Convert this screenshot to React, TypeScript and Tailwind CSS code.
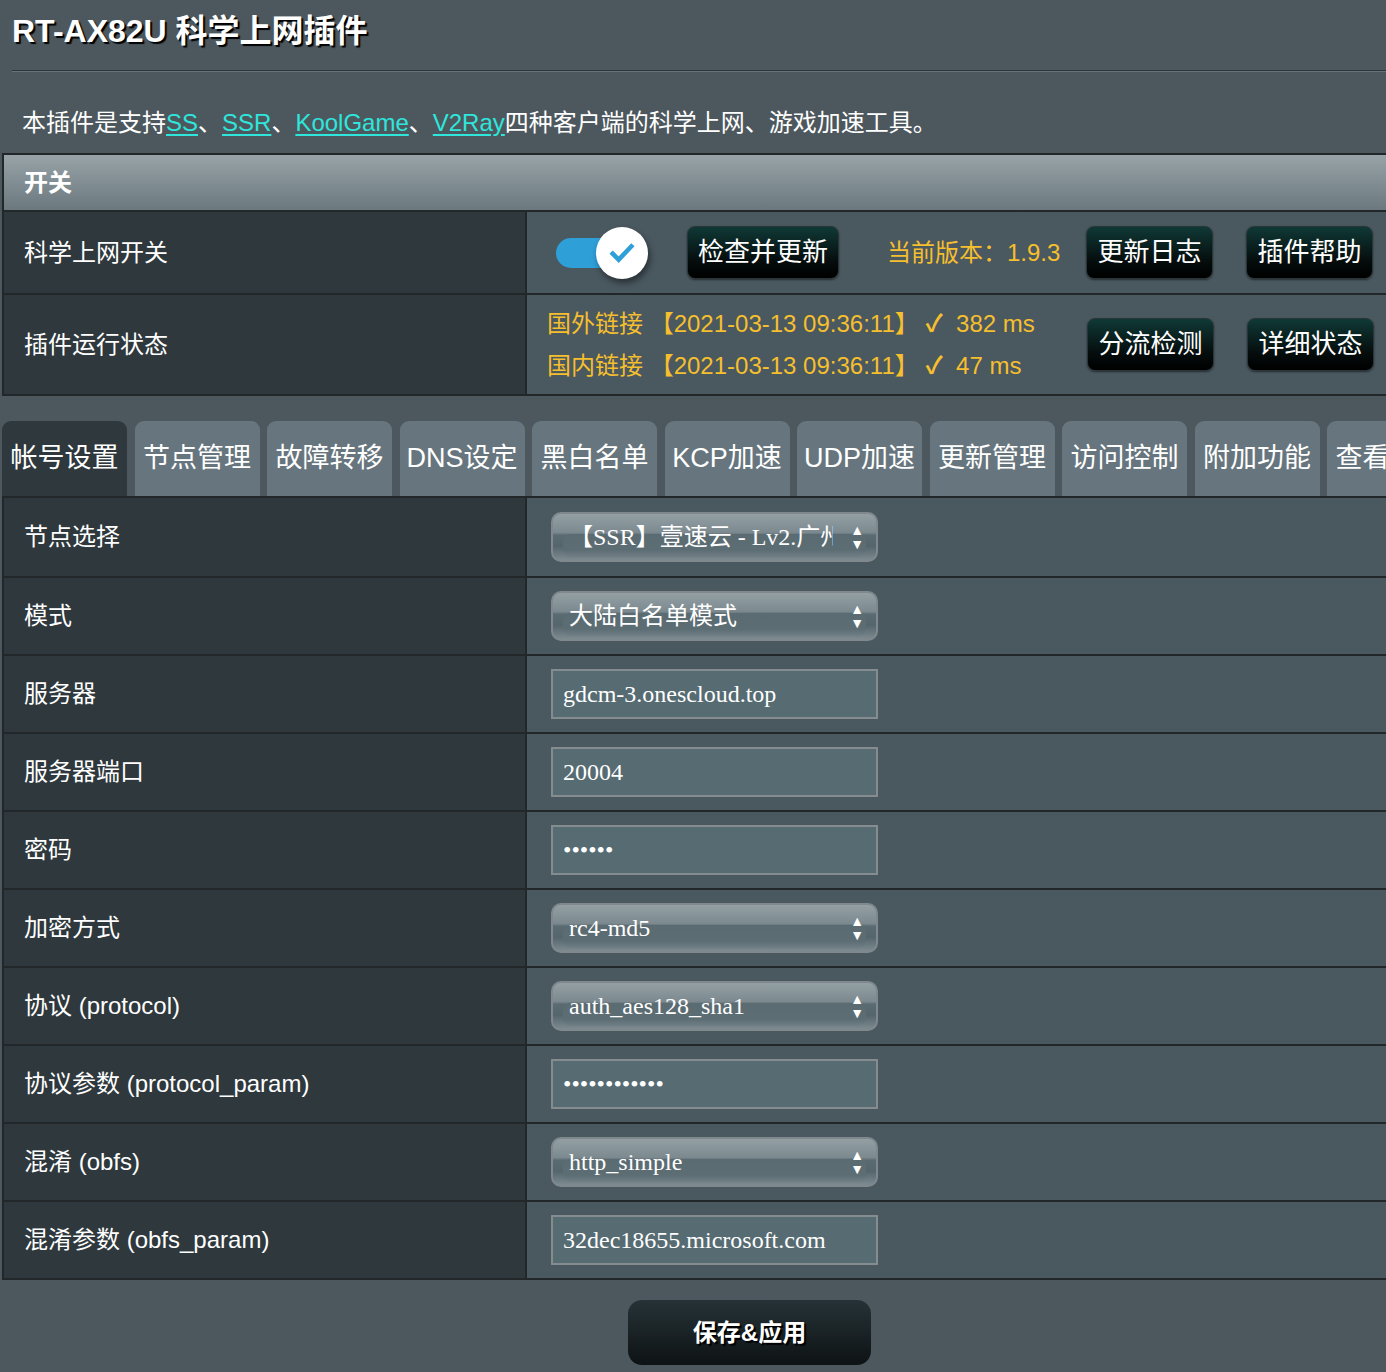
import { Fragment } from 'react';

const sans = 'font-["Liberation_Sans","Noto_Sans_CJK_SC",sans-serif]';
const serif = 'font-["Liberation_Serif","Noto_Sans_CJK_SC",serif]';

const tabs = ['帐号设置', '节点管理', '故障转移', 'DNS设定', '黑白名单', 'KCP加速', 'UDP加速', '更新管理', '访问控制', '附加功能', '查看日志'];

type Field = { label: string; kind: 'select' | 'input'; value: string };

const fields: Field[] = [
  { label: '节点选择', kind: 'select', value: '【SSR】壹速云 - Lv2.广州' },
  { label: '模式', kind: 'select', value: '大陆白名单模式' },
  { label: '服务器', kind: 'input', value: 'gdcm-3.onescloud.top' },
  { label: '服务器端口', kind: 'input', value: '20004' },
  { label: '密码', kind: 'input', value: '••••••' },
  { label: '加密方式', kind: 'select', value: 'rc4-md5' },
  { label: '协议 (protocol)', kind: 'select', value: 'auth_aes128_sha1' },
  { label: '协议参数 (protocol_param)', kind: 'input', value: '••••••••••••' },
  { label: '混淆 (obfs)', kind: 'select', value: 'http_simple' },
  { label: '混淆参数 (obfs_param)', kind: 'input', value: '32dec18655.microsoft.com' },
];

const DarkButton = ({ children }: { children: string }) => (
  <button className="flex h-[53px] w-full shrink-0 items-center justify-center whitespace-nowrap rounded-[8px] border border-[#2a3537] bg-[linear-gradient(to_bottom,#0f3936,#050b0b_70%,#000)] text-[26px] text-white shadow-[0_1px_2px_rgba(0,0,0,0.5)]">
    {children}
  </button>
);

const Select = ({ value }: { value: string }) => (
  <div className="relative flex h-[50px] w-[327px] items-center overflow-hidden rounded-[10px] border-2 border-[#7f898d] bg-[linear-gradient(to_bottom,#939fa3_0%,#7c8a90_40%,#5b6b72_46%,#55656c_70%,#7d8b90_100%)]">
    <div className="absolute inset-x-[10px] bottom-[3px] top-[20px] rounded-[8px] bg-[linear-gradient(to_bottom,#5b6b72,#5d6d74_70%,#6f7f85)]" />
    <span className={`relative w-[280px] overflow-hidden whitespace-nowrap pl-[16px] text-[24px] text-white ${serif}`}>{value}</span>
    <span className="absolute right-[12px] top-1/2 flex -translate-y-1/2 flex-col items-center text-[14px] leading-[14px] text-white">
      <span>▲</span>
      <span>▼</span>
    </span>
  </div>
);

const Input = ({ value }: { value: string }) => (
  <div className="flex h-[50px] w-[327px] items-center border-2 border-[#858c8f] bg-[#566b72] pl-[10px]">
    <span className={`whitespace-nowrap text-[24px] text-white ${serif}`}>{value}</span>
  </div>
);

export default function App() {
  return (
    <div className={`min-h-[1372px] w-full overflow-hidden bg-[#4d585e] ${sans}`}>
      <div className="w-[1480px]">
        {/* Title */}
        <div className="flex h-[70px] items-start pl-[12px] pt-[7px]">
          <h1 className="text-[32px] font-bold text-white [text-shadow:2px_2px_1px_#000]">RT-AX82U 科学上网插件</h1>
        </div>
        <div className="ml-[12px] border-t border-b border-t-[#2d3438] border-b-[#66737a]" />

        {/* Description */}
        <div className="flex h-[81px] items-center pl-[22px] pt-[20px] text-[24px] text-white">
          本插件是支持
          <a className="text-[#2ee6dc] underline underline-offset-[3px]">SS</a>、
          <a className="text-[#2ee6dc] underline underline-offset-[3px]">SSR</a>、
          <a className="text-[#2ee6dc] underline underline-offset-[3px]">KoolGame</a>、
          <a className="text-[#2ee6dc] underline underline-offset-[3px]">V2Ray</a>
          四种客户端的科学上网、游戏加速工具。
        </div>

        {/* Switch table */}
        <div className="ml-[2px] border-2 border-r-0 border-[#222729]">
          <div className="flex h-[55px] items-center bg-[linear-gradient(to_bottom,#97a3a7,#6b787e)] pl-[20px] text-[24px] font-bold text-white">
            开关
          </div>
          <div className="flex h-[83px] border-t-2 border-[#222729]">
            <div className="flex w-[523px] shrink-0 items-center border-r-2 border-[#222729] bg-[#2e383d] pl-[20px] text-[24px] text-white">
              科学上网开关
            </div>
            <div className="flex flex-1 items-center bg-[#4a5860]">
              <div className="relative ml-[29px] h-[54px] w-[94px]">
                <div className="absolute left-0 top-[12px] h-[30px] w-[64px] rounded-full bg-[#2f9fd8]" />
                <div className="absolute left-[40px] top-[1px] flex h-[52px] w-[52px] items-center justify-center rounded-full bg-white shadow-[2px_4px_6px_rgba(0,0,0,0.45)]">
                  <svg viewBox="0 0 24 24" className="h-[32px] w-[32px]" fill="none" stroke="#2f9fd8" strokeWidth="3.4" strokeLinecap="square">
                    <path d="M5 12.5l4.5 4.5L19 7" />
                  </svg>
                </div>
              </div>
              <div className="ml-[37px] w-[152px]">
                <DarkButton>检查并更新</DarkButton>
              </div>
              <span className="ml-[48px] w-[199px] whitespace-nowrap text-[24px] text-[#f5bf2e]">当前版本：1.9.3</span>
              <div className="w-[127px]">
                <DarkButton>更新日志</DarkButton>
              </div>
              <div className="ml-[33px] w-[127px]">
                <DarkButton>插件帮助</DarkButton>
              </div>
            </div>
          </div>
          <div className="flex h-[101px] border-t-2 border-[#222729]">
            <div className="flex w-[523px] shrink-0 items-center border-r-2 border-[#222729] bg-[#2e383d] pl-[20px] text-[24px] text-white">
              插件运行状态
            </div>
            <div className="flex flex-1 items-center bg-[#4a5860]">
              <div className="ml-[20px] flex w-[540px] flex-col gap-[10px] text-[24px] leading-[32px] text-[#f5bf2e]">
                <span className="whitespace-nowrap">国外链接 【2021-03-13 09:36:11】 <b className="font-bold">✓</b>&nbsp; 382 ms</span>
                <span className="whitespace-nowrap">国内链接 【2021-03-13 09:36:11】 <b className="font-bold">✓</b>&nbsp; 47 ms</span>
              </div>
              <div className="w-[127px]">
                <DarkButton>分流检测</DarkButton>
              </div>
              <div className="ml-[33px] w-[127px]">
                <DarkButton>详细状态</DarkButton>
              </div>
            </div>
          </div>
        </div>

        {/* Tabs */}
        <div className="mt-[25px] flex gap-[7.5px] pl-[2px]">
          {tabs.map((t, i) => (
            <div
              key={t}
              className={`flex h-[75px] w-[125px] shrink-0 items-center justify-center whitespace-nowrap rounded-t-[9px] text-[27px] text-white ${i === 0 ? 'bg-[#2e383d]' : 'bg-[#67767e]'}`}
            >
              {t}
            </div>
          ))}
        </div>

        {/* Account table */}
        <div className="ml-[2px] border-2 border-r-0 border-[#222729]">
          {fields.map((f, i) => (
            <Fragment key={f.label}>
              <div className={`flex h-[78px] ${i > 0 ? 'border-t-2 border-[#222729]' : ''}`}>
                <div className="flex w-[523px] shrink-0 items-center border-r-2 border-[#222729] bg-[#2e383d] pl-[20px] text-[24px] text-white">
                  {f.label}
                </div>
                <div className="flex flex-1 items-center bg-[#4a5860] pl-[24px]">
                  {f.kind === 'select' ? <Select value={f.value} /> : <Input value={f.value} />}
                </div>
              </div>
            </Fragment>
          ))}
        </div>

        {/* Save */}
        <div className="flex pl-[628px] pt-[20px]">
          <button className="h-[65px] w-[243px] rounded-[14px] bg-[linear-gradient(to_bottom,#263237,#0e1314)] text-[24px] font-bold text-white [text-shadow:2px_2px_1px_#000]">
            保存&amp;应用
          </button>
        </div>
      </div>
    </div>
  );
}
